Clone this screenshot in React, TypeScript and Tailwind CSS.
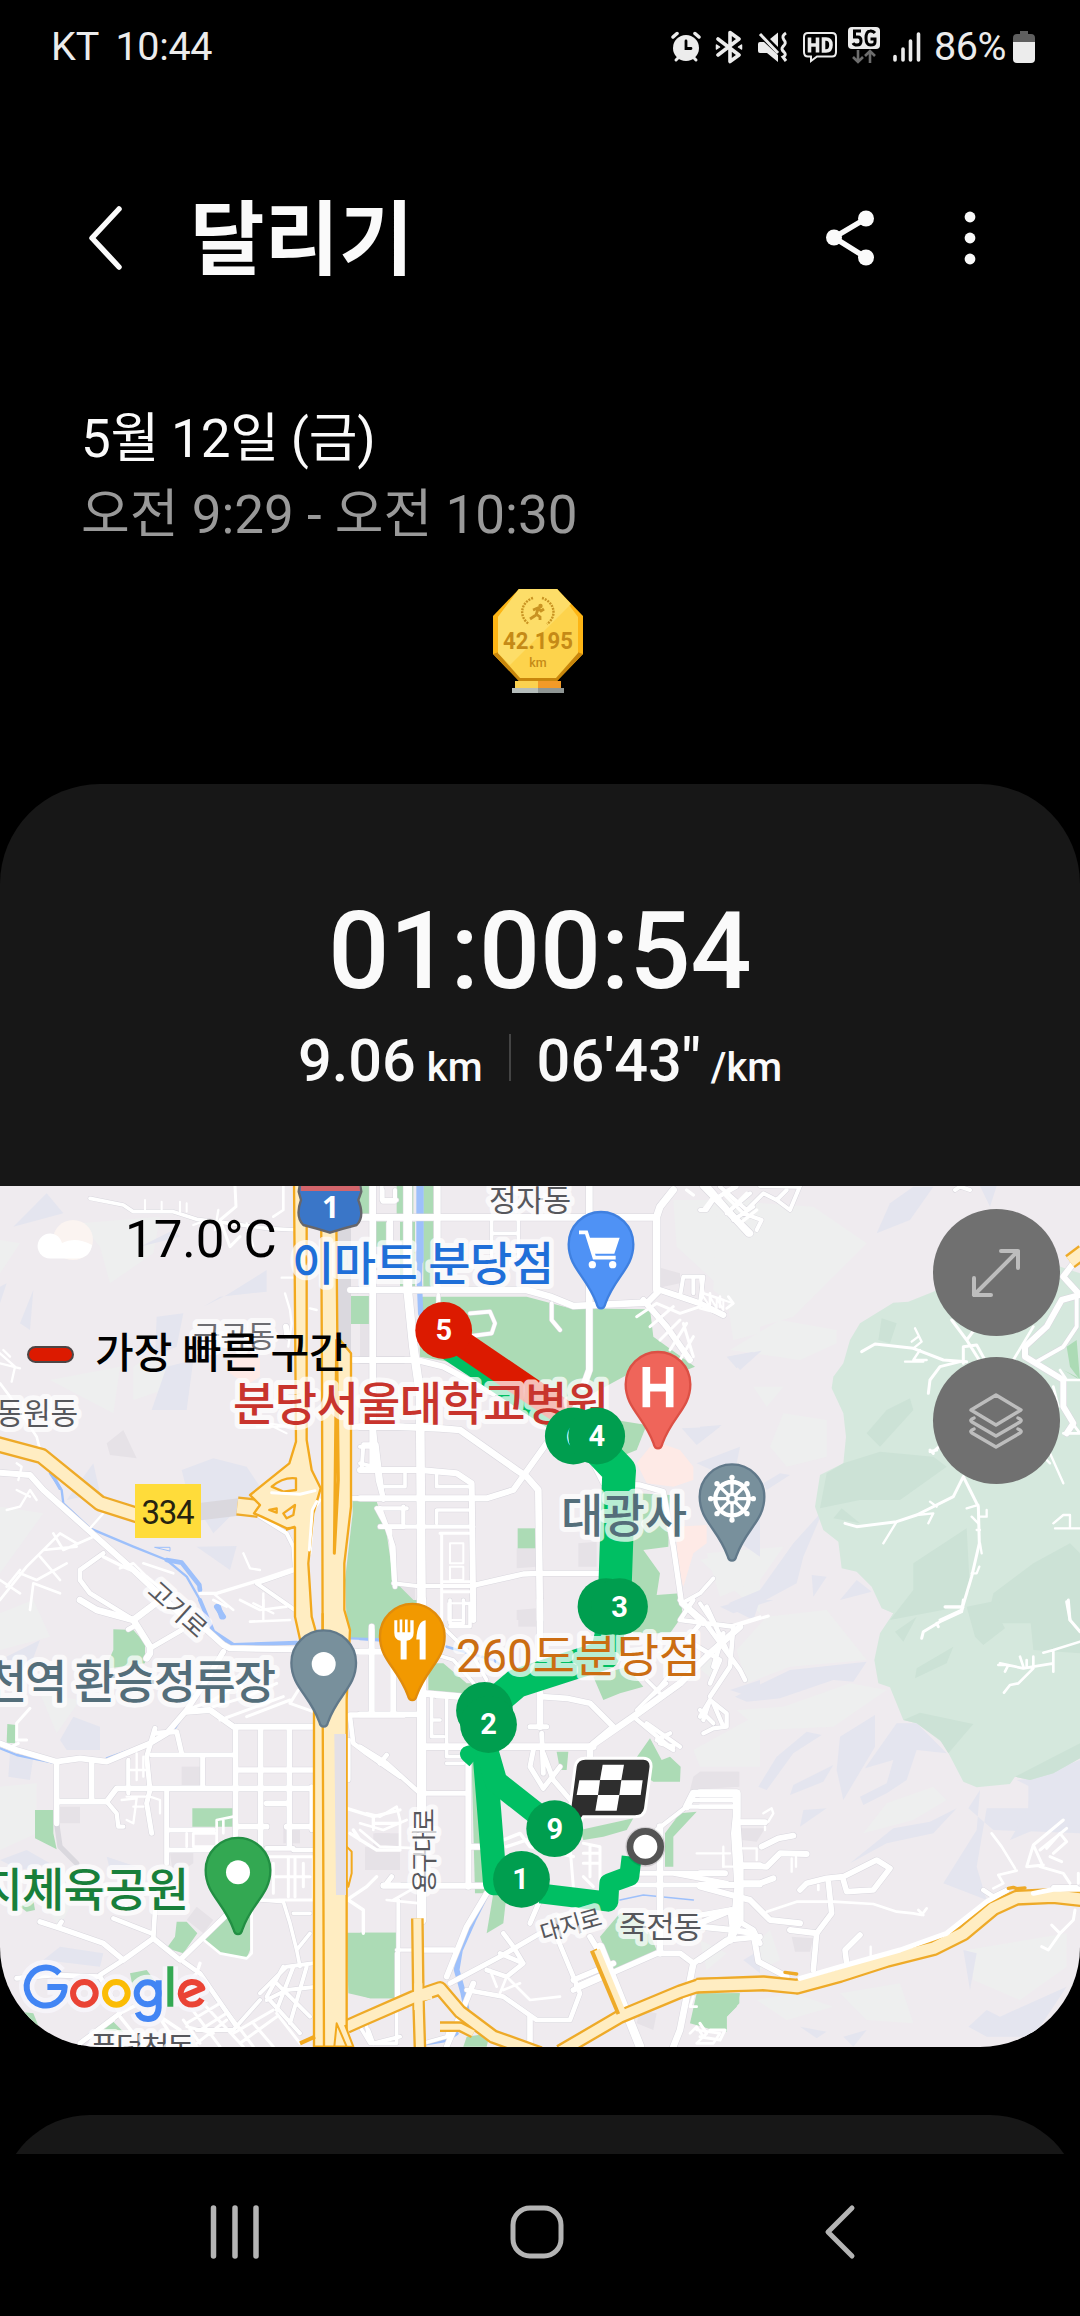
import React from "react";

type Stroke = [d: string, width: number];

interface Tile {
  x: number;
  y: number;
  lavender: string[];
  pale: string[];
  parks: string[];
  forest?: string[];
  forestShade?: string[];
  blocks: string[];
  pink?: string[];
  water: Stroke[];
  roads: Stroke[];
  tunnels?: Stroke[];
}

/* Map geometry is stored in tiles; each unit is a third of a pixel. */
const TILES: Tile[] = [
  {
    x: 0,
    y: 1180,
    lavender: [
      "M40 140L140 40L190 100Z",
      "M0 320L20 310L0 370Z",
      "M470 410L550 400L530 500L465 525Z",
      "M500 560L580 540L560 690L455 690Z",
      "M610 380L680 345L800 270V335L660 350Z",
      "M545 870L640 835L740 860L780 920L700 1000L640 1060L560 930Z",
      "M60 430L100 330L90 450Z",
      "M200 960L280 850L300 940Z",
      "M590 1100L710 1098L690 1170Z",
      "M420 200L520 150L540 170Z",
    ],
    pale: [
      "M240 130L480 110L460 220L330 310L300 200Z",
      "M0 180L60 190L0 280Z",
      "M400 560L500 490L520 620L400 660Z",
      "M150 600L360 560L340 700Z",
      "M0 980L130 1000L0 1180Z",
    ],
    parks: [
      "M1080 35H1108V105H1060Z",
      "M1128 125H1160V195H1128Z",
      "M1052 348H1108V432H1052Z",
      "M1058 960L1130 965L1150 1060L1180 1200L1200 1300V1330H1040L1035 1200L1058 1000Z",
    ],
    blocks: ["M320 790L370 750L410 835L330 825Z"],
    pink: ["M690 520H780V590L740 615L690 580Z"],
    water: [
      ["M150 880L185 930L190 970L270 1045L400 1100L500 1140L560 1190L600 1260L630 1330", 7],
      ["M500 1140L545 1148L598 1215L600 1230", 14],
      ["M465 1102H510V1112Z", 3],
      ["M655 1280L665 1310", 16],
      ["M155 880L180 925", 10],
    ],
    roads: [
      ["M270 55L370 75L400 95L520 95L590 118L690 130L800 145L890 150", 11],
      ["M435 60V95M485 65V95M540 65V95M560 70V95", 6],
      ["M705 18L708 80L660 120L690 200L720 170", 9],
      ["M580 135L620 120M645 150L655 90M740 130L760 200", 7],
      ["M850 20V90L820 110", 8],
      ["M855 340L870 390L875 430L865 500", 7],
      ["M858 440L862 470", 18],
      ["M845 293H890M930 385L950 390", 7],
      ["M0 520L45 560L35 605M0 550L60 565M10 510L30 530", 7],
      ["M0 610L30 650L110 770L120 810", 8],
      ["M0 878L90 885L130 930L400 1170L560 1320", 18],
      ["M50 850L65 860L55 900M20 990L60 980L90 930L110 960M50 930L90 950", 7],
      ["M270 1045L310 1000", 7],
      ["M0 1260L80 1160L180 1060L230 1090M60 1180L110 1200L200 1150M90 1290L100 1210L180 1240M0 1200L60 1240M160 1060L190 1110L280 1070M120 1130L180 1200M20 1220L60 1170M130 1110L230 1100", 8],
      ["M310 1120L240 1170L240 1200L270 1240L400 1320", 14],
      ["M400 1320L500 1240L440 1190L370 1160L310 1130", 10],
      ["M360 1165L400 1150L440 1190M430 1150L520 1180", 8],
      ["M600 1240L650 1240L780 1200L885 1165", 10],
      ["M730 1120L750 1165L780 1170M640 1240L700 1290", 7],
      ["M780 1010L860 1060L880 1100L885 1170L770 1210L885 1290", 12],
      ["M790 1240V1320M760 1270L820 1300", 7],
      ["M810 940L900 945L960 930", 9],
      ["M960 960L940 990L930 1120", 9],
      ["M1118 18V860", 20],
      ["M1050 112H1210M1050 330H1210M1060 540H1210M1060 740H1210", 18],
      ["M1145 18V60H1190", 12],
      ["M1165 130V190H1200", 12],
      ["M1090 793H1130L1150 960M1090 793L1085 870H1140", 12],
      ["M1058 955H1210M1140 1040H1210M1130 870H1210", 14],
      ["M1140 985L1160 1040L1180 1100L1185 1220", 14],
      ["M770 740L880 740L800 730L860 760", 6],
    ],
    tunnels: [
      ["M1030 130V510", 46],
      ["M600 995L725 980", 52],
    ],
  },
  {
    x: 360,
    y: 1180,
    lavender: [
      "M1100 530L1180 515L1130 565Z",
      "M965 745L1080 740L1010 795Z",
      "M1010 850L1140 800L1120 900Z",
      "M1100 1060L1200 1000V1130Z",
    ],
    pale: ["M940 60L1180 60V330L1080 320L950 200Z", "M1100 350L1200 330V460L1120 480Z", "M1020 1140L1200 1100V1300Z"],
    parks: [
      "M0 18H28V105H0Z",
      "M48 125H80V200H48Z",
      "M110 18H160V110H110Z",
      "M190 18H220V330H190Z",
      "M120 125H165V330H120Z",
      "M175 350L500 350L630 385L870 388L880 470L1005 560L980 570L900 520L810 580L700 640L600 700L520 650L350 560L180 530Z",
      "M0 348H28V432H0Z",
      "M640 700L860 735L830 810L780 830Z",
      "M0 960L50 965L80 1060L100 1200L170 1270V1330H0Z",
      "M473 1045H530V1105H473Z",
      "M830 940L930 945L925 1100L850 1110L900 1180L890 1245L960 1240L970 1320H800Z",
    ],
    blocks: [
      "M505 375L565 370L605 470Q600 510 570 505L540 440L505 450Z",
      "M690 385L755 390L750 490L720 515L690 510Z",
      "M890 260L960 280L960 310L890 325Z",
      "M470 1105L530 1105V1160L470 1165Z",
      "M655 1090L710 1085V1160H655Z",
      "M0 430H28V530H0Z",
      "M470 1290L530 1285V1320H470Z",
      "M100 1215L165 1225V1260L110 1250Z",
    ],
    pink: [
      "M830 850L870 800L900 790L960 810L1000 860L1000 900L940 920L860 910Z",
      "M950 1040L1040 1035V1090L1000 1120L970 1220L950 1150Z",
    ],
    water: [["M180 0L180 240L178 300L182 400", 16], ["M180 0V240", 22]],
    roads: [
      ["M38 18V720L55 900L70 955", 16],
      ["M0 112H890M0 330H500L570 350L640 378L860 368", 20],
      ["M0 540L170 540L250 560L400 640", 18],
      ["M143 18V330L160 500L180 640L185 1320", 26],
      ["M90 115V190", 18],
      ["M232 18V330", 20],
      ["M68 30V65H105V30", 12],
      ["M0 740L110 740L240 745L300 750L470 870L500 890L535 930L540 1320", 20],
      ["M0 870L180 870L290 880L335 910L340 1320", 18],
      ["M0 955L185 955L380 955L460 930L560 790L620 720", 18],
      ["M50 985L80 1040H340M130 980V1030M50 985H140", 13],
      ["M135 880V920H70M230 880V920H330M230 1030V990H330", 11],
      ["M245 1060V1320M330 1060H240M250 1205H340M250 1235H330", 9],
      ["M270 1090H310V1150H270ZM270 1160H310V1200H270ZM265 1270H310V1320H265Z", 6],
      ["M345 1215L490 1182L540 1180H720", 16],
      ["M185 1218H345M100 1210L170 1218", 12],
      ["M0 800L40 800M0 850L40 860", 12],
      ["M90 1040L100 1200", 10],
      ["M688 18V570L670 620", 20],
      ["M395 120V230M475 120V230M395 160H475", 11],
      ["M330 400L390 395L405 430L395 460L320 470", 11],
      ["M235 345V370M575 370V420L600 450", 12],
      ["M890 330V110L900 80L940 30", 22],
      ["M860 370L900 330L960 350L1020 370L1090 405", 18],
      ["M960 350L970 290H1030L1020 370M1000 290V340", 12],
      ["M850 360L920 440L990 540", 18],
      ["M830 410L890 370L960 400L1020 380M870 440L940 380M900 480L960 420M930 510L980 430M960 540L1000 470M1000 530L970 430", 9],
      ["M1030 350L1050 380V350L1070 385V355L1090 390V360L1120 370", 6],
      ["M1030 18L1100 90L1170 160", 20],
      ["M1060 60L1120 20M1100 100L1160 40M1140 130L1190 90M1090 40L1150 100M980 30L1000 45M1030 90L1060 50", 10],
      ["M700 850L730 910L840 915L910 935L940 1100L965 1270L1030 1330", 16],
      ["M965 1270L1020 1240L1060 1195M1020 1270L1060 1330", 12],
    ],
  },
  {
    x: 700,
    y: 1180,
    lavender: [
      "M530 160L570 70L640 20H700L630 120Z",
      "M85 530L185 512L120 570Z",
      "M0 740L65 735L0 785Z",
      "M85 1270L180 1230L280 1090L370 990L310 1130L290 1210L150 1285Z",
      "M335 1185L380 1190L340 1250Z",
      "M420 1260L470 1200L515 1235Z",
      "M840 18H890L870 80Z",
      "M190 910L240 880L270 885L200 930Z",
    ],
    pale: [
      "M50 60L340 80L500 190L350 340L280 410L180 440L40 330Z",
      "M90 510L240 420L410 450V490L300 540Z",
      "M250 700L380 720V830L260 860L210 800Z",
      "M20 1120L250 1100L180 1200L60 1250Z",
      "M160 620L250 620L200 680Z",
    ],
    parks: ["M1100 500L1130 480L1140 600L1110 560Z", "M1090 570L1130 590L1140 600Z"],
    forest: [
      "M700 335L625 365L580 368L480 430L450 480L430 550L400 590L395 625L430 700L438 770L430 850L360 885L345 980L370 1050L415 1085L425 1165L470 1175L515 1220L545 1285L580 1300L560 1340H1140V280L1050 250L900 240Z",
    ],
    forestShade: [
      "M545 415L590 430L570 490L535 480Z",
      "M500 760L560 690L630 655L640 690L540 800Z",
      "M430 850L540 815L700 830L740 860L600 960L480 960L360 985L380 880Z",
      "M400 1015L425 985L480 1030Z",
      "M640 1150L800 1045L810 1230L780 1280L570 1320L640 1230Z",
      "M880 1240L1000 1150L1110 1090L1140 1120V1330H860Z",
    ],
    blocks: ["M1070 520L1110 500L1100 560L1060 540Z"],
    water: [],
    roads: [
      ["M20 18L90 100L145 160", 20],
      ["M40 60L110 20M80 100L150 40M60 20L140 90M100 120L160 80M140 90L190 40L230 60L270 90L300 18M180 18L290 20M0 90L20 90L40 60M130 100L185 120L170 150M230 60L260 30", 12],
      ["M0 290L10 340L0 370M10 340L70 360M0 385L75 405M30 340V365M60 350V380M85 350L100 370L80 385", 8],
      ["M765 30L780 20L810 30", 12],
      ["M485 515L525 492L640 505L730 540L800 545", 9],
      ["M645 445L665 485L640 505M635 485L655 470M660 510L640 540H680M615 545H670", 7],
      ["M780 545L720 560L690 600L685 640", 9],
      ["M755 420L800 480L850 560M790 550V500L830 495L860 550M800 480L830 440", 9],
      ["M700 820L690 810M710 810L690 815M775 750L700 815", 9],
      ["M435 1030L470 1040L590 1025L650 1005L760 950L790 890L810 930L835 980L838 1090L815 1190L785 1290L720 1320", 9],
      ["M590 1025L550 1090M650 1005L700 1000L685 1030M690 965L710 980M735 1282H790M800 985L835 975M815 1010L835 1030M840 1090L845 1120M860 990V1010H840M815 1180H830L838 1160M830 1050H840", 7],
      ["M1050 820L1090 910M1030 830L1050 850", 7],
      ["M1090 290L1120 250M1090 290L1140 345L1085 360L1040 440L975 500L975 530L1090 600V680L1120 730L1100 760", 18],
      ["M1130 350V440L1090 500L1010 545", 12],
      ["M940 540L1000 440M1060 620L1075 680M1080 570L1100 600L1140 600M1090 760L1140 760L1110 720", 8],
      ["M1060 1030L1090 1005H1110V1045H1065M1110 1045H1140", 7],
      ["M1100 1265L1110 1320", 9],
    ],
  },
  {
    x: 0,
    y: 1600,
    lavender: [
      "M0 180L120 120L90 200L0 240Z",
      "M180 420L220 350L300 380L300 450H200Z",
      "M130 1080L180 1040L310 1060L300 1100Z",
      "M0 780L80 750L150 790L60 810Z",
      "M320 770L410 800L330 810Z",
      "M30 460L100 470L90 540L25 530Z",
    ],
    pale: ["M0 40L100 0L150 110L0 150Z", "M0 560L110 550V700L0 750Z", "M120 280L240 300L170 400Z", "M100 880L220 900L180 980Z"],
    parks: [
      "M340 88L400 90L435 130V190L330 205L320 195L340 150Z",
      "M1040 0H1210L1200 110L1130 115H1050Z",
      "M22 372L48 375L45 430L20 428Z",
      "M105 630H160V700L170 748L105 715Z",
      "M577 625H700V680H577Z",
      "M530 965H560L592 1000L550 1060L500 1045L525 1010Z",
      "M600 1010L690 930L750 950V1050L740 1075L660 1060Z",
      "M1040 998H1190V1195H1110L1045 1180Z",
      "M390 1120L440 1110L470 1150L400 1170Z",
      "M60 1235L100 1240L120 1290L80 1280Z",
      "M310 1290L340 1265L370 1295Z",
      "M60 920L100 900L105 930L80 935Z",
    ],
    blocks: [
      "M545 500H600V555H545Z",
      "M175 620H240V670H175Z",
      "M590 920L640 960L610 1000L560 960Z",
      "M1095 750H1200V810H1095Z",
      "M1125 700H1200V750H1125Z",
      "M510 760L580 755V790L520 830Z",
      "M850 680H900V730H850Z",
    ],
    pink: ["M72 205H92V225H72Z"],
    water: [
      ["M600 0L640 95L700 135L890 128", 12],
      ["M650 20L670 50", 16],
      ["M670 150L660 180L600 260L560 330L520 390", 9],
      ["M0 445L50 465L170 490M320 475L430 435", 7],
      ["M1050 115L1200 120", 7],
    ],
    roads: [
      ["M240 0L290 30L400 60L450 140V160L440 175M400 60L480 0", 20],
      ["M385 88L400 80M545 90L450 145", 15],
      ["M560 60L620 90L670 135L690 145L890 148", 18],
      ["M750 65L870 60M640 0L680 20M790 0V30M720 0L780 30L860 20", 8],
      ["M670 155L620 240L560 330L500 400L450 430L320 485L240 475L170 485L50 450L0 430", 17],
      ["M50 420H80M35 440L55 430M50 420V370L90 325", 9],
      ["M560 335L630 330L700 380H940", 18],
      ["M560 330L640 300L720 250L740 290L640 320M740 290L830 250M660 360L850 290M740 350L870 300M870 310L940 335M870 310L895 270", 9],
      ["M465 400L530 395L545 460M465 385L440 470L450 570L440 610L455 700", 15],
      ["M170 485V670M275 490V600M170 605H320L350 565H940", 17],
      ["M385 480V580M320 605L350 640L355 680H370", 13],
      ["M410 460V540M430 470V530M390 510H440M365 600L410 595L400 670L380 660M380 590H450L480 600V640M400 620H430", 7],
      ["M455 465H700M608 470V560M500 570V790M505 690H640M510 750H650", 15],
      ["M707 380V750M782 390V740M868 390V740M715 510H940M715 680H800M860 680H930M800 610H865", 17],
      ["M935 560V690M880 750H940M800 745H880", 14],
      ["M560 700V740M650 740V660L700 650M670 660V700M580 700H650V740H580Z", 8],
      ["M780 770H940V900H780M820 790V880M865 770V890M885 770V890M820 830H930M910 790V860", 9],
      ["M780 900L850 905L870 970L890 1050L930 1000M890 1050L900 1100M880 940H930", 11],
      ["M120 965L180 985L310 1030L370 1080L460 1015L540 1080L710 915", 16],
      ["M460 1015L465 930M340 955L455 1000M175 980L185 965M300 1125L370 1080M550 1085L600 1120L710 1280", 14],
      ["M50 1135L160 1125L300 1130L360 1240L240 1330", 15],
      ["M360 1250L400 1300M470 1240L530 1330M360 1240L440 1200M450 1230L540 1290M240 1330L340 1260M590 1120L560 1150L600 1200M600 1090L590 1120", 10],
      ["M780 1180L860 1100L940 1090M800 1200L860 1170L950 1160M850 1100L800 1190L900 1300M880 1100L830 1230M920 1100L870 1270M830 1150L930 1250M780 1200L700 1290L590 1290", 12],
      ["M640 1180L760 1340M600 1200L730 1340M570 1220L660 1340M550 1260L600 1330M700 1300L820 1230M640 1300L560 1280M590 1330L680 1260M660 1210L560 1270M720 1330L830 1250M830 1240L900 1330M760 1270L820 1340M680 1240L600 1290", 9],
      ["M755 930V1060L740 1075L660 1060L605 1015", 8],
      ["M1115 90V340M1180 130V340M1050 155H1200M1050 345H1210", 17],
      ["M1050 350L1060 430L1100 460L1200 530M1045 420L1045 540", 14],
      ["M1040 625L1120 650L1200 630M1120 670H1200M1120 650V680M1050 700L1130 750H1200M1060 690L1080 720M1040 900L1100 860L1130 830M1045 900L1090 930V1000", 10],
      ["M1150 855H1200M1160 850L1175 830", 15],
      ["M1105 1290L1120 1330L1200 1310M1195 900V1210", 12],
    ],
    tunnels: [["M170 670L180 740L230 790", 16]],
  },
  {
    x: 360,
    y: 1600,
    lavender: ["M1110 270L1200 240V300Z", "M1100 20L1200 0L1180 60Z", "M1150 1080L1200 1050V1120Z"],
    pale: ["M1000 450L1200 340V500L1020 500Z", "M950 150L1060 180V240Z"],
    parks: [
      "M0 0H180L200 110L90 115H0Z",
      "M205 190L250 190L320 250H390L380 280H205Z",
      "M780 0L960 0L965 50L930 100L820 100Z",
      "M700 230L800 200L850 260L780 280L730 300Z",
      "M590 455H625L620 510H600Z",
      "M870 415L905 480L930 470L962 500L960 545H880L810 500Z",
      "M660 690L820 655L800 690L730 710L670 720Z",
      "M960 640L1010 635L940 710L940 800H915V700Z",
      "M0 998H110V1195H30L0 1185Z",
      "M400 880L440 880L430 970L380 1000Z",
      "M720 1010L780 940L850 960L890 1050L760 1115Z",
      "M1010 1180H1140L1130 1220L1100 1250V1290L1060 1290L990 1270Z",
      "M320 1310L390 1300L380 1340H310Z",
      "M335 490L380 480V880H345Z",
    ],
    blocks: [
      "M1000 530L1020 515H1135V560L990 570Z",
      "M15 740H120V810H15Z",
      "M840 1230L890 1240L880 1290L830 1270Z",
      "M475 30H530V80H475Z",
      "M40 700H90V740H40Z",
    ],
    water: [
      ["M0 118L110 125", 6],
      ["M260 140L400 180L430 200", 8],
      ["M380 880L340 960L300 1050L290 1110L310 1180L320 1230", 17],
      ["M780 900L850 885L1000 900", 5],
      ["M200 1330L260 1320L290 1300", 12],
    ],
    roads: [
      ["M35 80V340M100 130V340M0 155H90M0 343H180", 17],
      ["M185 0V960", 28],
      ["M185 20L340 170L380 240M270 0V70H310V0M310 10H330V80H270M185 150L280 180L350 260", 11],
      ["M540 0V380M190 280L300 290M190 440H700", 20],
      ["M215 290V410H250M230 290H260V470H300M215 360H240M260 490H310", 11],
      ["M0 440L80 490L180 580H320M60 490L80 465", 14],
      ["M325 490V860M325 740H370M70 857H400", 18],
      ["M545 290L620 295L690 310L760 380L700 430", 17],
      ["M690 440V540M510 380H560M520 450L510 500L550 565L600 500M550 460L580 540L640 610M545 400L550 520", 15],
      ["M690 470V440L820 350L960 250L1050 160L1140 80", 20],
      ["M820 350L940 450L890 420L930 400M860 370L960 440M900 430L940 440", 13],
      ["M830 330L900 260L940 210M900 280L860 240M860 300L920 250", 11],
      ["M960 0L1030 60L1140 210L1155 240M1000 0L960 60L1120 80M1030 60L980 120L1080 180L1050 250M1040 20L1100 150M1090 100L1060 200M1120 80L1110 200L1050 290", 14],
      ["M1020 350L1050 300L1100 340V380L1060 385L1030 400M1050 300L1030 360M1060 310L1090 380M1020 330L1060 370", 13],
      ["M1120 75L1200 50", 8],
      ["M980 620L1000 580H1130V660L1140 800V960L1110 1020", 22],
      ["M1000 600H1120M890 690L980 620H1120", 13],
      ["M1140 667H1200M1140 795H1200M1130 850H1200", 16],
      ["M900 680V1060", 20],
      ["M730 855H1200M840 820H1090M940 820L1100 850", 15],
      ["M670 730L720 740V850M670 760H720M670 790H720M690 740V830M670 830L700 860M630 740L640 860", 9],
      ["M430 720L480 700L510 740L640 770M440 740L500 720", 10],
      ["M1010 760H1110M1090 740V800", 7],
      ["M20 640L60 650L110 620L120 660M0 670L70 690L140 660M40 650V690M0 690L60 740L180 745M120 660V740M80 900L180 910M100 900L170 860", 8],
      ["M190 1050H280M380 880L320 980L260 1130", 17],
      ["M540 900L510 970M270 1150L420 1070L540 1000L700 940", 15],
      ["M420 1060L490 1090L440 1130L380 1110M320 1170L430 1190L530 1260L630 1260L660 1180L640 1130L590 1010M460 1040L490 1090M430 1000L460 1040", 14],
      ["M420 1180L440 1130L510 1200L600 1190M430 1170L480 1150M390 1110L410 1160", 8],
      ["M510 1250V1340M340 1150L320 1200L260 1340", 17],
      ["M640 1140L760 1090M650 1160L740 1120M690 1010L720 1060", 17],
      ["M640 1170L890 1060L960 1060L1000 1090L1100 1020L1200 1010", 17],
      ["M1000 1090L960 1290L940 1340", 20],
      ["M1000 1190L990 1220H1010M990 1300L1010 1280L1030 1310L1010 1330M1010 1290L1080 1300L1060 1330L1010 1330", 8],
      ["M720 1040L840 1340", 26],
      ["M0 1280L30 1330H110M110 1060V1330M30 1330L20 1280M110 1050H180M190 1330L260 1310L270 1280", 11],
      ["M940 960L1110 930L1120 1010M1130 960L1180 990L1200 1030", 16],
    ],
  },
  {
    x: 700,
    y: 1600,
    lavender: [
      "M105 290L270 210L500 185L460 245L400 240L240 295L140 305Z",
      "M175 560L230 470L320 395L365 405L280 460L200 570Z",
      "M420 410L525 345V440L430 600L410 510Z",
      "M495 505L590 370L650 370L740 460L650 450L620 540L560 580L490 615L480 590L560 550L580 480Z",
      "M270 585L280 555L400 495L370 545Z",
      "M450 790L580 685L690 665L770 625L700 700L560 730Z",
      "M730 850L830 690L840 570L805 625L880 690L1140 700V490L1060 530L950 540L990 560L985 625H860L830 800L860 900Z",
      "M985 540L1140 480V640L1050 670L930 720L985 625Z",
      "M805 1280L860 1230L900 1250L1100 1160L1000 1310L860 1310Z",
      "M790 1050L830 1060L810 1170Z",
      "M60 20L130 0H220L100 40Z",
      "M300 1280L380 1295L350 1315Z",
      "M430 1310L500 1290L460 1340Z",
      "M310 630L380 625L300 680Z",
    ],
    pale: [
      "M110 150L200 50L380 30L500 180L270 200L140 250Z",
      "M110 330L250 320L450 250L560 270L400 380L180 390Z",
      "M490 700L560 610L700 560L740 600L640 660Z",
      "M800 1050L1100 1000V1100L960 1200L820 1140Z",
      "M170 1200L280 1180L400 1220L260 1260Z",
      "M420 1180L600 1150L640 1270L500 1260Z",
      "M0 1020L80 1060L20 1110Z",
      "M180 1020L210 990L240 1080L180 1110Z",
    ],
    parks: ["M0 1182L118 1180V1210L80 1250V1295L0 1270Z"],
    forest: [
      "M535 0H1140V475L1060 520L990 540L945 530L930 552L830 562L790 545L730 430L650 370L610 360L570 262L535 250L523 180L540 100L580 40L545 20Z",
    ],
    forestShade: [
      "M610 360L660 338L820 372L745 460L720 420L650 370Z",
      "M650 205L760 140L740 190L645 235Z",
      "M585 95L650 50L610 125Z",
      "M990 0H1140V160L1000 150L990 50Z",
      "M945 530L1140 430V475L1060 520L990 540Z",
      "M800 20L900 0L890 40L915 85L850 135L825 110Z",
    ],
    blocks: ["M0 515H118V560H0Z", "M120 685H195L170 725L125 720Z", "M275 1010L340 1015L330 1055H285Z"],
    water: [],
    roads: [
      ["M790 0L785 35L720 65L670 95L665 115M735 20H785M710 70L715 80", 9],
      ["M1105 0L1110 60L1140 95", 9],
      ["M1030 158L1060 150L1140 125M1060 150V215M1060 190L1000 200L970 205L900 190M960 170L970 200M980 180V200M1000 170V200M915 215L925 195L895 195M1000 205L955 250L930 255L912 278", 8],
      ["M115 75L205 48", 9],
      ["M0 580H110V650L105 700L115 860L105 960L95 1010", 24],
      ["M0 620H100M0 600H100", 13],
      ["M120 667H195M125 798L200 800L240 760L320 762M185 740L235 715L280 707M120 850H180L220 835", 18],
      ["M190 640L215 625L220 640L205 665M195 690V680M125 745H170V780M70 770V800H100M275 775V815M288 770V800", 7],
      ["M0 820H75M0 855H120M0 860L150 900L210 960L300 970M270 990L350 1000", 18],
      ["M300 870L320 850L380 835L430 830L530 780L570 805L520 870L440 875L430 840M385 845L395 940L350 1000L340 1110", 17],
      ["M355 855V870M200 935L290 905L400 905L520 912L590 935L640 940L665 945L680 925M655 930L670 945", 8],
      ["M440 1090L435 1050L480 1005", 17],
      ["M512 1040V1070", 7],
      ["M0 970L95 930M0 980L100 990L160 1000L175 1085L260 1130M0 1080L90 1020L110 980", 18],
      ["M0 1270L20 1300L10 1310M0 1310L60 1320L75 1290L30 1290", 9],
      ["M850 870L880 890L920 870M1060 862H1130", 14],
      ["M875 700L905 740L945 805M895 825L950 812M895 825L910 850L880 865", 8],
      ["M1000 735L1090 660M1000 735L980 800L1030 795M1020 750L1100 685M1000 735L1025 790M1040 745L1080 700L1100 725L1060 760M1020 800L1090 820L1110 850M1050 770L1085 785", 9],
      ["M1125 930L1120 960L1080 1000L1045 1050L1025 1040M1055 975L1080 1000M1135 820V850", 9],
    ],
  },
];

/* Arterial roads: yellow body with amber casing. */
const ARTERIALS: { x: number; y: number; paths: Stroke[] }[] = [
  { x: 0, y: 1180, paths: [["M-10 792L125 828L300 970L420 1008", 36], ["M712 978L775 985", 44]] },
  { x: 700, y: 1180, paths: [["M1110 245L1150 215", 34]] },
  {
    x: 360,
    y: 1600,
    paths: [
      ["M-40 1280L0 1262L160 1192L240 1165L300 1235L400 1310L540 1360", 30],
      ["M240 1280L300 1280L340 1300", 18],
      ["M172 955L175 1190L180 1350", 24],
      ["M600 1355L780 1250L960 1175L1020 1155L1220 1152", 30],
    ],
  },
  {
    x: 700,
    y: 1600,
    paths: [["M-10 1157L190 1150L290 1160L420 1125L560 1080L700 1045L790 1000L880 925L950 893L1060 888L1150 898", 34]],
  },
];

const tf = (t: { x: number; y: number }) => `translate(${t.x} ${t.y}) scale(0.33333)`;

function Fill({ pick, color, opacity }: { pick: (t: Tile) => string[] | undefined; color: string; opacity?: number }) {
  return (
    <g fill={color} opacity={opacity}>
      {TILES.map((t, i) => (
        <g key={i} transform={tf(t)}>
          {(pick(t) ?? []).map((d, j) => (
            <path key={j} d={d} />
          ))}
        </g>
      ))}
    </g>
  );
}

function Lines({ pick, color, extra = 0 }: { pick: (t: Tile) => Stroke[] | undefined; color: string; extra?: number }) {
  return (
    <g fill="none" stroke={color} strokeLinecap="round" strokeLinejoin="round">
      {TILES.map((t, i) => (
        <g key={i} transform={tf(t)}>
          {(pick(t) ?? []).map(([d, w], j) => (
            <path key={j} d={d} strokeWidth={w + extra} />
          ))}
        </g>
      ))}
    </g>
  );
}

function Highways() {
  return (
    <g strokeLinejoin="round">
      {["#eeaa28", "#ffedc2"].map((color, pass) => (
        <g key={color} fill="none" stroke={color}>
          {ARTERIALS.map((t, i) => (
            <g key={i} transform={tf(t)}>
              {t.paths.map(([d, w], j) => (
                <path key={j} d={d} strokeWidth={pass === 0 ? w + 14 : w} />
              ))}
            </g>
          ))}
        </g>
      ))}
      <path
        d="M300 1135L450 1092L600 1050L740 1000L860 905L920 872M1000 880L1060 868H1140"
        transform="translate(700 1600) scale(0.33333)"
        fill="none"
        stroke="#ffffff"
        strokeWidth="15"
        strokeLinecap="round"
      />
      <g transform="translate(0 1180) scale(0.33333)" stroke="#f2a91e" strokeWidth="7" fill="#ffedc2">
        <path d="M882 0H920V780L935 870L962 925L940 1000L925 1150L935 1310L960 1400H905L885 1310V1042L860 1045L785 1010L762 1000L780 975L750 945L868 850L888 785Z" />
        <path d="M815 920Q850 890 888 895V930L850 935Z" fill="#efebef" />
        <path d="M850 1000L885 975L880 1005L860 1015Z" fill="#efebef" />
        <path d="M808 990L830 985V998ZM858 1050L885 1040" />
        <path d="M963 0H1008L1012 470L1053 520V980L1033 1150V1290L1050 1350L1040 1560V2600H942V1560L968 1400L966 600Z" />
        <path d="M1010 480L1003 1120L1015 900Z" strokeWidth="9" />
        <path d="M968 1300V1560L972 2600" fill="none" />
      </g>
      <g transform="translate(0 1180) scale(0.33333)" fill="none" stroke="#ffffff" strokeLinecap="round">
        <path d="M815 938L900 943L945 932" strokeWidth="9" />
        <path d="M950 965L937 990L928 1110" strokeWidth="9" />
      </g>
      <g transform="translate(0 1600) scale(0.33333)" fill="none" stroke="#f2a91e" strokeWidth="6">
        <path d="M1003 1340L1010 1270L1040 1340H1060L1035 1275" fill="#ffedc2" />
        <path d="M1040 740L1055 755V820L1045 860L1040 840" />
        <path d="M900 1330L945 1310" strokeWidth="12" />
        <path d="M1003 402H1038V885H1008Z" fill="#e4e0e6" stroke="none" />
      </g>
      <g transform="translate(360 1600) scale(0.33333)" fill="none">
        <path d="M700 1050L780 1240" stroke="#eeaa28" strokeWidth="22" />
        <path d="M711 1050L790 1240" stroke="#ffedc2" strokeWidth="18" />
        <path d="M780 1240L800 1245" stroke="#ffedc2" strokeWidth="24" />
        <path d="M175 1150V1230M178 1192L215 1185" stroke="#ffedc2" strokeWidth="24" />
      </g>
      <g transform="translate(700 1600) scale(0.33333)" fill="none" stroke="#eeaa28" strokeWidth="10" strokeLinecap="round">
        <path d="M255 1117L290 1122M925 865L940 862L950 866L975 864" />
      </g>
    </g>
  );
}

function Route() {
  return (
    <g fill="none" strokeLinejoin="round">
      <g transform="translate(360 1180) scale(0.33333)">
        <path d="M275 500L600 715" stroke="#00bf63" strokeWidth="90" />
        <path d="M275 470L620 705" stroke="#dc1a00" strokeWidth="78" />
        <path d="M690 780L778 872L776 900L763 1280" stroke="#00bf63" strokeWidth="100" />
      </g>
      <g transform="translate(360 1600) scale(0.33333)" stroke="#00bf63">
        <path d="M755 70L735 165L640 195L470 250L400 310" strokeWidth="88" />
        <path d="M372 440L405 850L440 850" strokeWidth="72" />
        <path d="M355 455L325 462L345 480" strokeWidth="50" />
        <path d="M375 430L408 545L560 665" strokeWidth="68" />
        <path d="M540 880L745 905L748 850L808 828L815 770" strokeWidth="60" />
      </g>
    </g>
  );
}

interface LabelProps {
  x: number;
  y: number;
  size: number;
  color: string;
  children: string;
  width?: number;
  anchor?: "start" | "end" | "middle";
  rotate?: number;
  weight?: number;
}

function Label({ x, y, size, color, children, width, anchor = "start", rotate, weight = 400 }: LabelProps) {
  return (
    <text
      x={x}
      y={y}
      fontSize={size}
      fontWeight={weight}
      fill={color}
      stroke="#ffffff"
      strokeOpacity="0.72"
      strokeWidth="10"
      strokeLinejoin="round"
      paintOrder="stroke"
      textAnchor={anchor}
      textLength={width}
      transform={rotate !== undefined ? `rotate(${rotate} ${x} ${y})` : undefined}
    >
      {children}
    </text>
  );
}

function Pin({ x, y, fill, edge, children }: { x: number; y: number; fill: string; edge: string; children: React.ReactNode }) {
  return (
    <g transform={`translate(${x} ${y}) scale(0.33333)`}>
      <path
        d="M-97 0A97 97 0 0 1 97 0C97 72 42 96 13 178Q10 192 0 192Q-10 192 -13 178C-42 96 -97 72 -97 0Z"
        fill={fill}
        stroke={edge}
        strokeWidth="7"
      />
      {children}
    </g>
  );
}

function Dot({ x, y, n, dx = 0, color = "#009e4f" }: { x: number; y: number; n: string; dx?: number; color?: string }) {
  return (
    <g>
      <circle cx={x} cy={y} r="28.4" fill={color} />
      <text x={x + dx} y={y + 9.8} fontSize="29" fontWeight="700" fill="#fff" textAnchor="middle">
        {n}
      </text>
    </g>
  );
}

function MapCanvas() {
  return (
    <svg
      viewBox="0 1186 1080 861"
      className="block h-full w-full font-['Roboto','Noto_Sans_CJK_KR',sans-serif]"
      role="img"
      aria-label="달리기 경로"
    >
      <rect x="0" y="1186" width="1080" height="861" fill="#efebef" />
      <Fill pick={(t) => t.pale} color="#eeefef" />
      <Fill pick={(t) => t.lavender} color="#e4e5ef" />
      <Fill pick={(t) => t.blocks} color="#e6e2e7" />
      <Fill pick={(t) => t.pink} color="#feeae6" />
      <Fill pick={(t) => t.forest} color="#d5e8dd" />
      <Fill pick={(t) => t.forestShade} color="#cce2d6" />
      <Fill pick={(t) => t.parks} color="#acdbb5" />
      <Lines pick={(t) => t.water} color="#9dc0fb" />
      <Lines pick={(t) => t.tunnels} color="#dad8de" />
      <Lines pick={(t) => t.roads.filter((r) => r[1] > 10)} color="#d9d7de" extra={3} />
      <Lines pick={(t) => t.roads} color="#ffffff" />
      <Highways />

      <g transform="translate(0 1180) scale(0.33333)">
        <path d="M900 10H1080L1084 35L1075 60Q1095 110 1070 135Q1030 145 990 158Q950 145 910 135Q885 110 903 60L896 35Z" fill="#3a76c8" stroke="#66666b" strokeWidth="7" />
        <path d="M904 10H1078L1080 33H902Z" fill="#d3656b" />
      </g>
      <text x="330.5" y="1218" fontSize="30" fontWeight="700" fill="#fff" textAnchor="middle" className="font-['Noto_Sans']">
        1
      </text>
      <rect x="135" y="1484" width="66" height="54" fill="#ffdc3a" />
      <text x="168" y="1523.5" fontSize="33" fill="#262310" textAnchor="middle" textLength="53">
        334
      </text>

      <Route />

      <Label x={489} y={1211} size={30} color="#56575c" width={82}>정자동</Label>
      <Label x={193} y={1347} size={30} color="#6d6d72" width={82}>금곡동</Label>
      <Label x={-4} y={1424} size={30} color="#56575c" width={82}>동원동</Label>
      <Label x={90} y={2059} size={31} color="#56575c" width={105}>풍덕천동</Label>
      <Label x={619} y={1938} size={31} color="#56575c" width={83}>죽전동</Label>
      <Label x={146} y={1593} size={25} color="#56575c" rotate={42}>고기로</Label>
      <Label x={434} y={1893} size={26} color="#56575c" rotate={-90} width={85}>용구대로</Label>
      <Label x={543} y={1942} size={24} color="#56575c" rotate={-16} width={63}>대지로</Label>
      <Label x={292} y={1280} size={46} color="#1f6fd8" width={262} weight={500}>이마트 분당점</Label>
      <Label x={233} y={1420} size={46} color="#c8342d" width={376} weight={500}>분당서울대학교병원</Label>
      <Label x={561} y={1532} size={46} color="#546e7a" width={126} weight={500}>대광사</Label>
      <Label x={456} y={1672} size={46} color="#cb6d12" width={245}>260도분당점</Label>
      <Label x={276} y={1698} size={46} color="#546e7a" anchor="end" width={331} weight={500}>동천역 환승정류장</Label>
      <Label x={189} y={1906} size={46} color="#187f3a" anchor="end" width={250} weight={500}>수지체육공원</Label>

      <circle cx="573.3" cy="1436" r="28.4" fill="#009e4f" />
      <text x="566" y="1442" fontSize="18" fill="#fff">(</text>
      <Dot x={596.7} y={1436} n="4" />
      <circle cx="606" cy="1606.7" r="28.4" fill="#009e4f" />
      <Dot x={619.5} y={1606.7} n="3" />
      <circle cx="484.5" cy="1710.5" r="28.4" fill="#009e4f" />
      <Dot x={488.5} y={1724.5} n="2" />
      <Dot x={443.7} y={1330.5} n="5" color="#dc1a00" />

      <g transform="translate(360 1600) scale(0.33333)">
        <path
          d="M632 640L650 500Q654 479 676 479H850Q872 480 868 505L852 625Q848 646 825 646H668L650 672Z"
          fill="#2e2e2e"
          stroke="#fff"
          strokeWidth="18"
          strokeLinejoin="round"
          paintOrder="stroke"
        />
        <g fill="#fff">
          <path d="M728 494H792L784 540H720Z" />
          <path d="M658 541H720L714 585H650Z" />
          <path d="M784 541H848L842 585H778Z" />
          <path d="M714 585H778L770 632H706Z" />
        </g>
        <circle cx="856" cy="740" r="60" fill="#000000" opacity="0.12" />
        <circle cx="856" cy="740" r="46" fill="#fff" stroke="#545454" strokeWidth="20" />
      </g>
      <Dot x={554.7} y={1828.7} n="9" />
      <Dot x={521.5} y={1879.3} n="1" dx={-1} />

      <Pin x={601} y={1244.3} fill="#4f92f5" edge="#3f80e0">
        <path d="M-66 -36H-44L-20 40H44" fill="none" stroke="#fff" strokeWidth="11" />
        <path d="M-38 -20H56L40 28H-24Z" fill="#fff" />
        <circle cx="-26" cy="61" r="11" fill="#fff" />
        <circle cx="35" cy="61" r="11" fill="#fff" />
      </Pin>
      <Pin x={658} y={1384.3} fill="#ef655a" edge="#dc5045">
        <path d="M-35 -52V69M35 -52V69M-35 10H35" fill="none" stroke="#fff" strokeWidth="23" />
      </Pin>
      <Pin x={732} y={1496.7} fill="#78909c" edge="#61798a">
        <g transform="translate(0 6)" stroke="#fff" fill="none">
          <circle r="50" strokeWidth="13" />
          <circle r="14" strokeWidth="9" />
          <path d="M0 -64V-12M0 64V12M-64 0H-12M64 0H12M-45 -45L-9 -9M45 45L9 9M-45 45L-9 9M45 -45L9 -9" strokeWidth="10" strokeLinecap="round" />
          <g fill="#fff" stroke="none">
            <circle cy="-64" r="8" />
            <circle cy="64" r="8" />
            <circle cx="-64" r="8" />
            <circle cx="64" r="8" />
            <circle cx="45" cy="45" r="8" />
            <circle cx="-45" cy="45" r="8" />
            <circle cx="45" cy="-45" r="8" />
            <circle cx="-45" cy="-45" r="8" />
          </g>
        </g>
      </Pin>
      <Pin x={323.7} y={1662.7} fill="#78909c" edge="#61798a">
        <circle cy="4" r="36" fill="#fff" />
      </Pin>
      <Pin x={412.3} y={1636.2} fill="#f29900" edge="#e18c0b">
        <path d="M-54 -48V-10Q-54 12 -35 14V70H-17V14Q4 12 4 -10V-48H-6V-12H-14V-50H-22V-12H-30V-50H-38V-12H-45V-48ZM40 -48Q15 -46 12 10H22V70H40Z" fill="#fff" />
      </Pin>
      <Pin x={238} y={1870.2} fill="#33a852" edge="#228f43">
        <circle cy="6" r="36" fill="#fff" />
      </Pin>
    </svg>
  );
}

function GoogleMark() {
  return (
    <svg viewBox="0 0 560 190" className="h-[63.3px] w-[186.7px] overflow-visible" role="img" aria-label="Google">
      {[true, false].map((halo) => (
        <g key={String(halo)} fill="none" strokeLinejoin="round" strokeWidth={halo ? 46 : 18} stroke="#f7f6fb" opacity={halo ? 0.85 : 1}>
          <path stroke={halo ? undefined : "#4285f4"} d="M106 31A57 57 0 1 0 122 72H70" />
          <circle stroke={halo ? undefined : "#ea4335"} cx="181" cy="91" r="34" />
          <circle stroke={halo ? undefined : "#fbbc05"} cx="277" cy="91" r="34" />
          <circle stroke={halo ? undefined : "#4285f4"} cx="371" cy="91" r="33" />
          <path stroke={halo ? undefined : "#4285f4"} d="M404 52V134Q402 168 372 168Q348 168 341 148" />
          <path stroke={halo ? undefined : "#34a853"} d="M439 10V131" />
          <path stroke={halo ? undefined : "#ea4335"} d="M472 103L535 76Q526 56 502 57A34 34 0 1 0 534 108" />
        </g>
      ))}
    </svg>
  );
}

function StatusBar() {
  return (
    <div className="flex h-[94px] items-center justify-between pl-[51px] pr-[45px] text-[39.500px] leading-none text-[#ececec]">
      <span className="whitespace-pre">KT <span className="ml-[7px] tracking-[-0.3px]">10:44</span></span>
      <div className="flex items-center">
        <svg viewBox="0 0 30 32" className="h-8 w-[30px]" fill="none" stroke="#ececec" strokeLinecap="round">
          <circle cx="15" cy="17" r="13" fill="#ececec" stroke="none" />
          <path d="M2 6L6 2.5M28 6L24 2.5" strokeWidth="3.5" />
          <path d="M5 29L8 26M25 29L22 26" strokeWidth="3" />
          <path d="M15 10V17.5H20" stroke="#000" strokeWidth="2.8" />
        </svg>
        <svg viewBox="0 0 28 34" className="ml-3.5 h-[34px] w-7" fill="none" stroke="#ececec" strokeWidth="3.600" strokeLinecap="round" strokeLinejoin="round">
          <path d="M3 9L24 25L15 31.500V2.500L24 9L3 25" />
          <path d="M1.500 15L4.500 17L1.500 19ZM26.500 15L23.500 17L26.500 19Z" strokeWidth="1.500" fill="#ececec" />
        </svg>
        <svg viewBox="0 0 30 32" className="ml-[15px] h-8 w-[30px]" fill="#ececec">
          <path d="M0 13Q0 11 2 11H6L20 24V31L9 22H2Q0 22 0 20ZM12 8L20 1.500V16Z" />
          <path d="M2 3L20 22" stroke="#ececec" strokeWidth="3" />
          <path d="M28 2Q23 5 26 9Q29 12 25 15.500Q22.500 18 26 21Q29 24 25 26L28 30" fill="none" stroke="#ececec" strokeWidth="3" />
        </svg>
        <svg viewBox="0 0 34 32" className="ml-[15px] h-8 w-[34px]" fill="none" stroke="#ececec">
          <path d="M5 2H29Q33 2 33 6V21Q33 25.500 29 25.500H14L8 30V25.500H5Q1 25.500 1 21V6Q1 2 5 2Z" strokeWidth="2" />
          <path d="M6.500 6.500V21.500M14.500 6.500V21.500M6.500 14H14.500M20.500 8V20H23Q28 20 28 14Q28 8 23 8Z" strokeWidth="3.600" />
        </svg>
        <svg viewBox="0 0 32 38" className="mb-1 ml-[11px] h-[38px] w-8">
          <rect x="0" y="1" width="32" height="22" rx="4" fill="#ececec" />
          <path d="M13 5H6.500V11H10Q13 11 13 15Q13 19 9 19Q6 19 5 17M27 7Q25 4.500 22 5Q18 5.500 18 12Q18 19 22.500 19Q27 19 27 16V13H22.500" fill="none" stroke="#000" strokeWidth="3" />
          <path d="M10 24V36M5 31L10 36L15 31M22 37V25M17 30L22 25L27 30" fill="none" stroke="#6d6d6d" strokeWidth="2.600" />
        </svg>
        <svg viewBox="0 0 28 32" className="ml-[13px] h-8 w-7" stroke="#ececec" strokeWidth="3.600" strokeLinecap="round">
          <path d="M2 25.500V29M10 18V29M17.500 10V29M25.500 3V29" />
        </svg>
        <span className="ml-[13px] w-[75px] tracking-[-0.4px]">86%</span>
        <svg viewBox="0 0 22 34" className="ml-[4px] h-[34px] w-[22px]">
          <path d="M7 1H15V4H18Q22 4 22 8V12H0V8Q0 4 4 4H7Z" fill="#5f5f5f" />
          <path d="M0 12H22V29Q22 33 18 33H4Q0 33 0 29Z" fill="#ececec" />
        </svg>
      </div>
    </div>
  );
}

function AppBar() {
  return (
    <header className="mt-[83px] flex h-[122px] items-center pl-[84px] pr-[96px]">
      <svg viewBox="0 0 40 66" className="h-[66px] w-10" fill="none" stroke="#fafafa" strokeWidth="5.500" strokeLinecap="round" strokeLinejoin="round">
        <path d="M35 4L8 33L35 62" />
      </svg>
      <h1 className="ml-[66px] flex-1 pt-[5px] text-[81px] font-bold leading-[120px] text-[#fafafa]">달리기</h1>
      <svg viewBox="0 0 50 58" className="h-[58px] w-[50px]" fill="#fafafa">
        <path d="M41 9.500L9 28.500L41 48.500" fill="none" stroke="#fafafa" strokeWidth="5.500" />
        <circle cx="41" cy="9.500" r="8" />
        <circle cx="9" cy="28.500" r="8" />
        <circle cx="41" cy="48.500" r="8" />
      </svg>
      <svg viewBox="0 0 28 58" className="ml-[81px] h-[58px] w-7" fill="#fafafa">
        <circle cx="14" cy="8" r="5.400" />
        <circle cx="14" cy="29" r="5.400" />
        <circle cx="14" cy="50" r="5.400" />
      </svg>
    </header>
  );
}

function Trophy() {
  return (
    <svg viewBox="0 0 92 106" className="mx-auto h-[106px] w-[92px]" aria-label="42.195 km">
      <path d="M27 0H65L91 27V65L65 92H27L1 65V27Z" fill="#fdb515" />
      <path d="M1 65L27 92H65L91 65L85 63L64 88H28L7 63Z" fill="#c8860c" />
      <path d="M27 0H65L86 28V64L64 89H28L6 64V28Z" fill="#fdd34c" />
      <path d="M27 0H65L79 15L18 76L6 64V28Z" fill="#fddd68" />
      <g fill="none" stroke="#c99322" strokeWidth="2.400">
        <path d="M41 9A17 15 0 0 0 37 35" strokeDasharray="2 1" />
        <path d="M50 9A17 15 0 0 1 55 35" strokeDasharray="2 1" />
        <path d="M41 21L46 19L49 22L52 20M46 20L44 26L38 30M44 25L48 28V31" strokeWidth="2.800" />
      </g>
      <circle cx="48.500" cy="17" r="2.200" fill="#c99322" />
      <text x="46" y="60" fontSize="24" fontWeight="700" fill="#c58a17" textAnchor="middle" textLength="70" lengthAdjust="spacingAndGlyphs">42.195</text>
      <text x="46" y="78" fontSize="12.500" fontWeight="500" fill="#c58a17" textAnchor="middle">km</text>
      <path d="M23 92H46V99H23Z" fill="#fbd150" />
      <path d="M46 92H69V99H46Z" fill="#f29a27" />
      <path d="M20 99H46V104H20Z" fill="#b5bdbb" />
      <path d="M46 99H72V104H46Z" fill="#8f9694" />
    </svg>
  );
}

function MapButton({ children, label }: { children: React.ReactNode; label: string }) {
  return (
    <button aria-label={label} className="flex size-[127px] items-center justify-center rounded-full bg-[#707070]">
      <svg viewBox="0 0 60 60" className="size-[60px]" fill="none" stroke="#bdbdbd" strokeWidth="4" strokeLinecap="round" strokeLinejoin="round">
        {children}
      </svg>
    </button>
  );
}

export default function App() {
  return (
    <div className="flex h-[2316px] w-[1080px] flex-col overflow-hidden bg-black font-['Roboto','Noto_Sans_CJK_KR',sans-serif]">
      <StatusBar />
      <AppBar />

      <section className="mt-[102px] pl-[81px] text-[53px] leading-[76px]">
        <p className="tracking-[-0.2px] text-[#fafafa] [word-spacing:-1px]">5월 12일 (금)</p>
        <p className="text-[#999999]">오전 9:29 - 오전 10:30</p>
      </section>
      <div className="mt-[36px] flex pr-[4px]">
        <Trophy />
      </div>

      <main className="mt-[89px] flex h-[1263px] shrink-0 flex-col overflow-hidden rounded-[100px] bg-[#171717]">
        <div className="flex h-[402px] shrink-0 flex-col items-center pt-[98px] font-medium text-[#fafafa]">
          <div className="text-[107.500px] leading-[138px]">01:00:54</div>
          <div className="flex items-baseline text-[59.500px] leading-[82px]">
            <span>9.06</span>
            <span className="ml-[11px] text-[40px]">km</span>
            <span className="mx-[26px] h-[47px] w-0.5 bg-[#444444]" />
            <span>06'43"</span>
            <span className="ml-[10px] text-[40px]">/km</span>
          </div>
        </div>
        <div className="relative h-[861px] shrink-0">
          <MapCanvas />
          <svg viewBox="0 0 66 46" className="absolute left-[33px] top-[32px] h-[46px] w-[66px]">
            <circle cx="40" cy="22" r="20" fill="#fbf4f1" />
            <path d="M17 40.500A12.500 12.500 0 1 1 23 17Q27 19 29 25Q42 18 59 27Q57 40 44 40.500Z" fill="#ffffff" />
          </svg>
          <div className="absolute left-[125px] top-[24px] text-[51px] leading-[60px] text-black">17.0°C</div>
          <div className="absolute left-[27px] top-[140px] flex items-center">
            <span className="h-[17px] w-[47px] rounded-full border-2 border-[#4d4545] bg-[#dc1a00]" />
            <span className="ml-[21px] text-[42px] font-medium leading-[56px] text-black">가장 빠른 구간</span>
          </div>
          <div className="absolute right-[20.500px] top-[23px] flex flex-col gap-[21px]">
            <MapButton label="지도 확대">
              <path d="M8 52L52 8M35 8H52V25M8 35V52H25" />
            </MapButton>
            <MapButton label="지도 유형">
              <path d="M30 4L55 19L30 34L5 19ZM8 27Q3 29 6 31L30 45L54 31Q57 29 52 27M8 38Q3 40 6 42L30 56L54 42Q57 40 52 38" strokeWidth="3.400" />
            </MapButton>
          </div>
          <div className="absolute bottom-[21px] left-[24px]">
            <GoogleMark />
          </div>
        </div>
      </main>

      <div className="mt-[68px] h-[39px] shrink-0 overflow-hidden">
        <div className="h-[240px] rounded-[90px] bg-[#171717]" />
      </div>

      <nav className="flex h-[162px] shrink-0 items-center justify-between pb-[6px] pl-[205px] pr-[219px]">
        <svg viewBox="0 0 60 60" className="size-[60px]" stroke="#b4b4b4" strokeWidth="5.500" strokeLinecap="round">
          <path d="M8.500 6V54M30 6V54M51 6V54" />
        </svg>
        <svg viewBox="0 0 60 60" className="mr-[12px] size-[60px]" fill="none" stroke="#b4b4b4" strokeWidth="5">
          <rect x="6" y="6" width="48" height="48" rx="17" />
        </svg>
        <svg viewBox="0 0 40 60" className="h-[60px] w-10" fill="none" stroke="#b4b4b4" strokeWidth="5" strokeLinecap="round" strokeLinejoin="round">
          <path d="M31 6L7 30L31 54" />
        </svg>
      </nav>
    </div>
  );
}
